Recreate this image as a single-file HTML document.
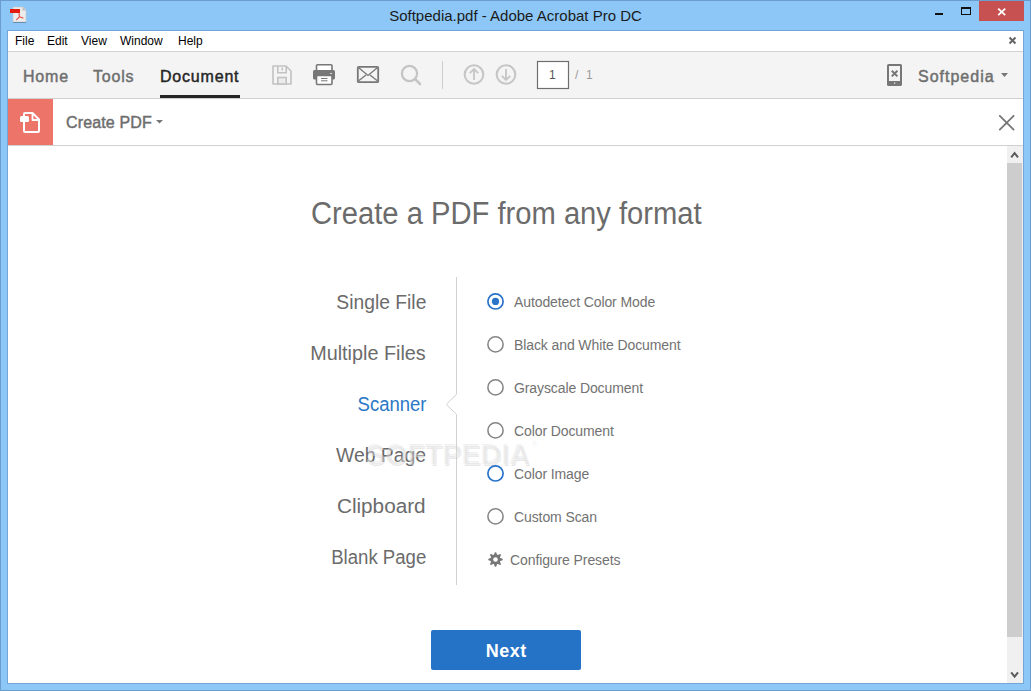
<!DOCTYPE html>
<html><head><meta charset="utf-8">
<style>
*{margin:0;padding:0;box-sizing:border-box}
html,body{width:1031px;height:691px;overflow:hidden;background:#8cc7f8;font-family:"Liberation Sans",sans-serif}
.abs{position:absolute}
svg{position:absolute;overflow:visible}
#frame{position:absolute;left:0;top:0;width:1031px;height:691px;border:1px solid #6a9cce;background:#8cc7f8}
#title{position:absolute;left:0;top:7px;width:1031px;text-align:center;font-size:15px;color:#1b1b1b;white-space:nowrap}
#client{position:absolute;left:7px;top:30px;width:1017px;height:654px;border:1px solid #73a6d8;background:#fff}
#menubar{position:absolute;left:8px;top:31px;width:1015px;height:21px;background:#fff;border-bottom:1px solid #d2d2d2}
.menu{position:absolute;top:3px;font-size:12px;color:#000}
#toolbar{position:absolute;left:8px;top:52px;width:1015px;height:47px;background:#f4f4f4;border-bottom:1px solid #d0d0d0}
.tab{position:absolute;top:16px;font-size:16px;-webkit-text-stroke:0.45px currentColor;color:#6e6e6e;white-space:nowrap;letter-spacing:0.8px}
#cpbar{position:absolute;left:8px;top:99px;width:1015px;height:47px;background:#fff;border-bottom:1px solid #d0d0d0}
#content{position:absolute;left:8px;top:146px;width:999px;height:537px;background:#fff}
#scroll{position:absolute;left:1007px;top:146px;width:16px;height:537px;background:#f0f0f0}
.left{position:absolute;right:605px;font-size:20px;color:#6b6b6b;white-space:nowrap;text-align:right;transform-origin:right center}
.radio{position:absolute;left:487px;width:17px;height:17px;border:1.7px solid #858585;border-radius:50%}
.opt{position:absolute;left:514px;font-size:14px;color:#727272;white-space:nowrap;letter-spacing:-0.1px}
</style></head><body>
<div id="frame"></div>
<!-- pdf icon -->
<svg style="left:0;top:0" width="40" height="30">
  <path d="M13 7 H23 L26 10 V22 H13 Z" fill="#ececec" stroke="#c8c8c8" stroke-width="0.6"/>
  <path d="M22.5 7 L26 10.5 H22.5 Z" fill="#bdbdbd"/>
  <rect x="10" y="9" width="10" height="4" fill="#e21b0c"/>
  <path d="M19 13 L19.4 16.8 L16.6 19.6 M19.4 16.8 L23 18" stroke="#e8473b" stroke-width="1.1" fill="none" stroke-linecap="round"/>
  <rect x="13" y="22" width="13" height="1" fill="#6c8fb0"/>
</svg>
<div id="title">Softpedia.pdf - Adobe Acrobat Pro DC</div>
<!-- window controls -->
<div class="abs" style="left:935px;top:13px;width:8px;height:2px;background:#111"></div>
<div class="abs" style="left:961px;top:7px;width:10px;height:8px;border:1px solid #111;border-top-width:2px"></div>
<div class="abs" style="left:979px;top:1px;width:45px;height:20px;background:#c75050"></div>
<svg style="left:979px;top:1px" width="45" height="20">
  <path d="M19.2 7.6 L26.2 14.2 M26.2 7.6 L19.2 14.2" stroke="#fff" stroke-width="1.8"/>
</svg>
<div id="client"></div>
<div id="menubar">
  <div class="menu" style="left:7px">File</div>
  <div class="menu" style="left:39px">Edit</div>
  <div class="menu" style="left:73px">View</div>
  <div class="menu" style="left:112px">Window</div>
  <div class="menu" style="left:170px">Help</div>
</div>
<svg style="left:1008px;top:36px" width="10" height="10">
  <path d="M1.5 1.5 L7.5 7.5 M7.5 1.5 L1.5 7.5" stroke="#666" stroke-width="2"/>
</svg>
<div id="toolbar">
  <div class="tab" style="left:15px">Home</div>
  <div class="tab" style="left:85px">Tools</div>
  <div class="tab" style="left:152px;color:#262626">Document</div>
  <div class="abs" style="left:152px;top:43px;width:80px;height:3px;background:#262626"></div>
</div>
<!-- toolbar icons -->
<svg style="left:0;top:0" width="1031" height="100">
  <!-- save (disabled) -->
  <path d="M273 66 H286 L291 71 V84 H273 Z" fill="none" stroke="#c2c2c2" stroke-width="1.6" stroke-linejoin="round"/>
  <path d="M277.8 66 V72.8 H286.2 V66" fill="none" stroke="#c2c2c2" stroke-width="1.6"/>
  <rect x="281.5" y="67.5" width="1.5" height="3" fill="#c2c2c2"/>
  <rect x="277.8" y="77.5" width="8.4" height="6.5" fill="#ececec" stroke="#c2c2c2" stroke-width="1.6"/>
  <!-- print -->
  <rect x="316.5" y="64.8" width="15.5" height="7" rx="1" fill="#fff" stroke="#777" stroke-width="1.6"/>
  <rect x="313" y="70" width="22" height="9.5" rx="1.5" fill="#777"/>
  <rect x="330" y="73" width="2" height="1" fill="#ddd"/>
  <rect x="316.5" y="75.5" width="15.5" height="9" rx="1" fill="#fff" stroke="#777" stroke-width="1.6"/>
  <rect x="321" y="78" width="6.5" height="1" fill="#777"/>
  <rect x="321" y="80.3" width="6.5" height="1" fill="#777"/>
  <!-- mail -->
  <rect x="357.8" y="66.8" width="20.4" height="15.4" rx="1" fill="none" stroke="#777" stroke-width="1.8"/>
  <path d="M358.7 67.8 L368 75.5 L377.3 67.8 M358.7 80.8 L366 75 M377.3 80.8 L370 75" fill="none" stroke="#777" stroke-width="1.3"/>
  <!-- search (disabled) -->
  <circle cx="409.5" cy="73.5" r="7.6" fill="none" stroke="#c4c4c4" stroke-width="2.2"/>
  <path d="M415.2 79.2 L420 84" stroke="#c4c4c4" stroke-width="2.6" stroke-linecap="round"/>
  <!-- separator -->
  <rect x="442" y="61" width="1" height="28" fill="#cdcdcd"/>
  <!-- up/down -->
  <circle cx="474" cy="74.5" r="9.3" fill="none" stroke="#c6c6c6" stroke-width="2.1"/>
  <path d="M474 80 V69.5 M469.8 73.2 L474 69 L478.2 73.2" fill="none" stroke="#c6c6c6" stroke-width="1.8"/>
  <circle cx="506" cy="74.5" r="9.3" fill="none" stroke="#c6c6c6" stroke-width="2.1"/>
  <path d="M506 69 V79.5 M501.8 75.8 L506 80 L510.2 75.8" fill="none" stroke="#c6c6c6" stroke-width="1.8"/>
  <!-- page box -->
  <rect x="537.5" y="61.5" width="31" height="27" fill="#fff" stroke="#6e6e6e" stroke-width="1.2"/>
  <!-- phone icon -->
  <rect x="887" y="64" width="15" height="22" rx="1.6" fill="#777"/>
  <rect x="889" y="66" width="11" height="15" fill="#f4f4f4"/>
  <path d="M891.8 70.8 L897.4 76.4 M897.4 70.8 L891.8 76.4" stroke="#777" stroke-width="2"/>
  <rect x="894" y="82.5" width="1.2" height="1.2" fill="#f4f4f4"/>
  <!-- dropdown -->
  <path d="M1001 73 H1008 L1004.5 77 Z" fill="#777"/>
</svg>
<div class="abs" style="left:549px;top:68px;font-size:12px;color:#555">1</div>
<div class="abs" style="left:575px;top:68px;font-size:12px;color:#9a9a9a">/</div>
<div class="abs" style="left:586px;top:68px;font-size:12px;color:#9a9a9a">1</div>
<div class="abs" style="left:918px;top:68px;font-size:16px;-webkit-text-stroke:0.45px currentColor;color:#6e6e6e;letter-spacing:1px;white-space:nowrap">Softpedia</div>

<div id="cpbar">
  <div class="abs" style="left:0;top:0;width:45px;height:46px;background:#ec7469"></div>
  <div class="abs" style="left:58px;top:15px;font-size:16px;-webkit-text-stroke:0.45px currentColor;letter-spacing:0.15px;color:#6e6e6e;white-space:nowrap">Create PDF</div>
</div>
<svg style="left:0;top:99px" width="1031" height="47">
  <!-- create pdf icon -->
  <path d="M24 23 V15 Q24 14 25 14 H32.5 L39 20.5 V32 Q39 33 38 33 H25 Q24 33 24 32 V23" fill="none" stroke="#fff" stroke-width="2" stroke-linejoin="round"/>
  <path d="M32.5 14 V21 H39" fill="none" stroke="#fff" stroke-width="1.8" stroke-linejoin="round"/>
  <rect x="20" y="17" width="9" height="6" rx="1.5" fill="#fff"/>
  <!-- dropdown -->
  <path d="M156 21 H163 L159.5 24.5 Z" fill="#777"/>
  <!-- close -->
  <path d="M999.8 16.8 L1013.6 30.6 M1013.6 16.8 L999.8 30.6" stroke="#777" stroke-width="1.8" stroke-linecap="round"/>
</svg>
<div id="content"></div>
<div id="scroll"></div>
<div class="abs" style="left:1007px;top:163px;width:15px;height:474px;background:#cdcdcd"></div>
<svg style="left:1007px;top:146px" width="16" height="537">
  <path d="M4.2 11.3 L7.6 7.1 L11 11.3" fill="none" stroke="#5a5a5a" stroke-width="2"/>
  <path d="M4.2 526.4 L7.6 530.6 L11 526.4" fill="none" stroke="#5a5a5a" stroke-width="2"/>
</svg>

<div class="abs" style="left:310.5px;top:196px;font-size:31px;color:#6b6b6b;white-space:nowrap;transform:scaleX(0.941);transform-origin:left top">Create a PDF from any format</div>

<div class="left" style="top:290.5px;transform:scaleX(0.964)">Single File</div>
<div class="left" style="top:341.5px;transform:scaleX(0.99)">Multiple Files</div>
<div class="left" style="top:392.5px;color:#2a78c6;transform:scaleX(0.925)">Scanner</div>
<div class="left" style="top:443.5px;transform:scaleX(0.967)">Web Page</div>
<div class="left" style="top:494.5px;transform:scaleX(1.036)">Clipboard</div>
<div class="left" style="top:545.5px;transform:scaleX(0.93)">Blank Page</div>

<svg style="left:0;top:0" width="1031" height="691">
  <path d="M456.5 277 V394.3 L446.3 404.4 L456.5 414.3 V585" fill="none" stroke="#d2d2d2" stroke-width="1"/>
</svg>

<svg style="left:0;top:0" width="1031" height="691">
  <circle cx="495.5" cy="301.4" r="7.6" fill="none" stroke="#2a73c9" stroke-width="1.7"/>
  <circle cx="495.5" cy="344.4" r="7.6" fill="none" stroke="#858585" stroke-width="1.55"/>
  <circle cx="495.5" cy="387.4" r="7.6" fill="none" stroke="#858585" stroke-width="1.55"/>
  <circle cx="495.5" cy="430.4" r="7.6" fill="none" stroke="#858585" stroke-width="1.55"/>
  <circle cx="495.5" cy="473.4" r="7.6" fill="none" stroke="#2a73c9" stroke-width="1.7"/>
  <circle cx="495.5" cy="516.4" r="7.6" fill="none" stroke="#858585" stroke-width="1.55"/>
  <circle cx="495.5" cy="301.4" r="3.6" fill="#2a73c9"/>
</svg>
<div class="opt" style="top:294px">Autodetect Color Mode</div>
<div class="opt" style="top:337px">Black and White Document</div>
<div class="opt" style="top:380px">Grayscale Document</div>
<div class="opt" style="top:423px">Color Document</div>
<div class="opt" style="top:466px">Color Image</div>
<div class="opt" style="top:509px">Custom Scan</div>
<svg style="left:487px;top:551px" width="17" height="17">
  <path d="M6.60 5.00 L7.70 1.50 Q8.50 0.90 9.30 1.50 L10.40 5.00 Z M9.63 4.68 L12.88 2.98 Q13.87 3.13 14.02 4.12 L12.32 7.37 Z M12.00 6.60 L15.50 7.70 Q16.10 8.50 15.50 9.30 L12.00 10.40 Z M12.32 9.63 L14.02 12.88 Q13.87 13.87 12.88 14.02 L9.63 12.32 Z M10.40 12.00 L9.30 15.50 Q8.50 16.10 7.70 15.50 L6.60 12.00 Z M7.37 12.32 L4.12 14.02 Q3.13 13.87 2.98 12.88 L4.68 9.63 Z M5.00 10.40 L1.50 9.30 Q0.90 8.50 1.50 7.70 L5.00 6.60 Z M4.68 7.37 L2.98 4.12 Q3.13 3.13 4.12 2.98 L7.37 4.68 Z " fill="#777"/>
  <circle cx="8.5" cy="8.5" r="5" fill="#777"/>
  <circle cx="8.5" cy="8.5" r="2.3" fill="#fff"/>
</svg>
<div class="opt" style="top:552px;left:510px">Configure Presets</div>

<div class="abs" style="left:366px;top:439px;font-size:29px;font-weight:bold;color:rgba(255,255,255,0.45);text-shadow:0.8px 0.8px 0.6px rgba(0,0,0,0.09),-0.6px -0.6px 0.6px rgba(0,0,0,0.06);white-space:nowrap;letter-spacing:-0.2px;transform:scaleX(1.0);transform-origin:left top">SOFTPEDIA<span style="font-size:9px;vertical-align:top;font-weight:normal;margin-left:1px">®</span></div>

<div class="abs" style="left:431px;top:630px;width:150px;height:40px;background:#2473c6;border-radius:2px;color:#fff;font-weight:bold;font-size:18px;text-align:center;line-height:42px;letter-spacing:0.5px;text-indent:0.5px">Next</div>
</body></html>
